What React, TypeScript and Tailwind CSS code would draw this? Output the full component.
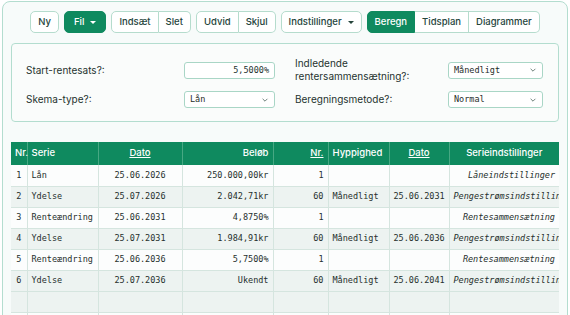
import React from "react";

const sans = "font-['Inter','Noto_Sans',sans-serif]";
const mono = "font-['DejaVu_Sans_Mono','Liberation_Mono',monospace]";

function Caret() {
  return <span className="ml-[6px] inline-block w-0 h-0 border-l-[3px] border-r-[3px] border-t-[3px] border-l-transparent border-r-transparent border-t-current align-middle" />;
}

function Chevron() {
  return (
    <svg width="8" height="8" viewBox="0 0 10 10" className="text-[#6b7d77]">
      <path d="M2 3.5 L5 6.5 L8 3.5" fill="none" stroke="currentColor" strokeWidth="1.2" />
    </svg>
  );
}

function Select({ value, w }: { value: string; w: string }) {
  return (
    <div className={`${w} h-[17px] flex items-center justify-between px-[5px] border border-[#a9d6c6] rounded-[3px] bg-white ${mono} text-[8.5px] text-[#1f2d29]`}>
      <span>{value}</span>
      <Chevron />
    </div>
  );
}

type Row = { nr: number; serie: string; dato: string; belob: string; antal: string; hyp: string; dato2: string; indst: string };

const rows: Row[] = [
  { nr: 1, serie: "Lån", dato: "25.06.2026", belob: "250.000,00kr", antal: "1", hyp: "", dato2: "", indst: "Låneindstillinger" },
  { nr: 2, serie: "Ydelse", dato: "25.07.2026", belob: "2.042,71kr", antal: "60", hyp: "Månedligt", dato2: "25.06.2031", indst: "Pengestrømsindstillinger" },
  { nr: 3, serie: "Renteændring", dato: "25.06.2031", belob: "4,8750%", antal: "1", hyp: "", dato2: "", indst: "Rentesammensætning" },
  { nr: 4, serie: "Ydelse", dato: "25.07.2031", belob: "1.984,91kr", antal: "60", hyp: "Månedligt", dato2: "25.06.2036", indst: "Pengestrømsindstillinger" },
  { nr: 5, serie: "Renteændring", dato: "25.06.2036", belob: "5,7500%", antal: "1", hyp: "", dato2: "", indst: "Rentesammensætning" },
  { nr: 6, serie: "Ydelse", dato: "25.07.2036", belob: "Ukendt", antal: "60", hyp: "Månedligt", dato2: "25.06.2041", indst: "Pengestrømsindstillinger" },
];

export default function App() {
  const btn = "h-[22px] px-[7px] flex items-center text-[9.5px] font-medium border border-[#b5dccd] bg-white text-[#25443b]";
  const green = "h-[22px] px-[7px] flex items-center text-[9.5px] font-medium border border-[#0f8a5f] bg-[#0f8a5f] text-white";
  const td = "h-[21px] px-[4px] border-r border-b border-[#d5e5df] whitespace-nowrap overflow-hidden";
  const th = "h-[23px] px-[4px] border-r border-[#47a883] font-medium whitespace-nowrap";

  return (
    <div className={`${sans} mx-[2px] mt-[1px] h-[330px] border border-[#b3ddcf] rounded-[8px] bg-[#f7fbfa] px-[8px] pt-[9px] overflow-hidden`}>
      <div className="flex justify-center gap-[5px]">
        <div className={`${btn} rounded-[5px]`}>Ny</div>
        <div className={`${green} rounded-[5px] px-[9px]`}>Fil<Caret /></div>
        <div className="flex">
          <div className={`${btn} rounded-l-[5px]`}>Indsæt</div>
          <div className={`${btn} border-l-0 rounded-r-[5px]`}>Slet</div>
        </div>
        <div className="flex">
          <div className={`${btn} rounded-l-[5px]`}>Udvid</div>
          <div className={`${btn} border-l-0 rounded-r-[5px]`}>Skjul</div>
        </div>
        <div className={`${btn} rounded-[5px]`}>Indstillinger<Caret /></div>
        <div className="flex">
          <div className={`${green} rounded-l-[5px]`}>Beregn</div>
          <div className={`${btn} border-l-0`}>Tidsplan</div>
          <div className={`${btn} border-l-0 rounded-r-[5px]`}>Diagrammer</div>
        </div>
      </div>

      <div className="mt-[10px] w-[548px] border border-[#b3ddcf] rounded-[4px] bg-[#fafcfb] px-[14px] pt-[13px] pb-[13px] grid grid-cols-2 gap-x-[20px] gap-y-[8px] text-[10px] text-[#25332f]">
        <div className="flex items-center">
          <span className="w-[158px]">Start-rentesats?:</span>
          <div className={`w-[91px] h-[17px] flex items-center justify-end px-[5px] border border-[#a9d6c6] rounded-[3px] bg-white ${mono} text-[8.5px]`}>5,5000%</div>
        </div>
        <div className="flex items-center">
          <span className="w-[153px] leading-[13px]">Indledende<br />rentersammensætning?:</span>
          <Select value="Månedligt" w="w-[95px]" />
        </div>
        <div className="flex items-center">
          <span className="w-[158px]">Skema-type?:</span>
          <Select value="Lån" w="w-[91px]" />
        </div>
        <div className="flex items-center">
          <span className="w-[153px]">Beregningsmetode?:</span>
          <Select value="Normal" w="w-[95px]" />
        </div>
      </div>

      <table className="mt-[20px] w-[548px] table-fixed border-collapse">
        <colgroup>
          <col className="w-[16px]" />
          <col className="w-[71px]" />
          <col className="w-[84px]" />
          <col className="w-[91px]" />
          <col className="w-[55px]" />
          <col className="w-[61px]" />
          <col className="w-[60px]" />
          <col className="w-[110px]" />
        </colgroup>
        <thead>
          <tr className="bg-[#0f8a5f] text-white text-[9.5px]">
            <th className={`${th} px-[2px] text-left`}>Nr.</th>
            <th className={`${th} text-left`}>Serie</th>
            <th className={`${th} text-center underline`}>Dato</th>
            <th className={`${th} text-right`}>Beløb</th>
            <th className={`${th} text-right underline`}>Nr.</th>
            <th className={`${th} text-left`}>Hyppighed</th>
            <th className={`${th} text-center underline`}>Dato</th>
            <th className={`${th} text-center border-r-0`}>Serieindstillinger</th>
          </tr>
        </thead>
        <tbody className={`${mono} text-[8.5px] text-[#26302d]`}>
          {rows.map((r, i) => (
            <tr key={r.nr} className={i % 2 === 0 ? "bg-[#fcfdfd]" : "bg-[#edf3f1]"}>
              <td className={`${td} text-center px-[2px]`}>{r.nr}</td>
              <td className={`${td} text-left`}>{r.serie}</td>
              <td className={`${td} text-center`}>{r.dato}</td>
              <td className={`${td} text-right`}>{r.belob}</td>
              <td className={`${td} text-right`}>{r.antal}</td>
              <td className={`${td} text-left`}>{r.hyp}</td>
              <td className={`${td} text-center`}>{r.dato2}</td>
              <td className={`${td} italic border-r-0 ${r.indst.startsWith("Penge") ? "text-left" : "text-right"}`}>{r.indst}</td>
            </tr>
          ))}
          {[0, 1].map((k) => (
            <tr key={"e" + k} className={k === 0 ? "bg-[#edf3f1]" : "bg-[#fcfdfd]"}>
              {[0, 1, 2, 3, 4, 5, 6, 7].map((c) => (
                <td key={c} className={`${td} ${c === 7 ? "border-r-0" : ""}`}></td>
              ))}
            </tr>
          ))}
        </tbody>
      </table>
    </div>
  );
}
